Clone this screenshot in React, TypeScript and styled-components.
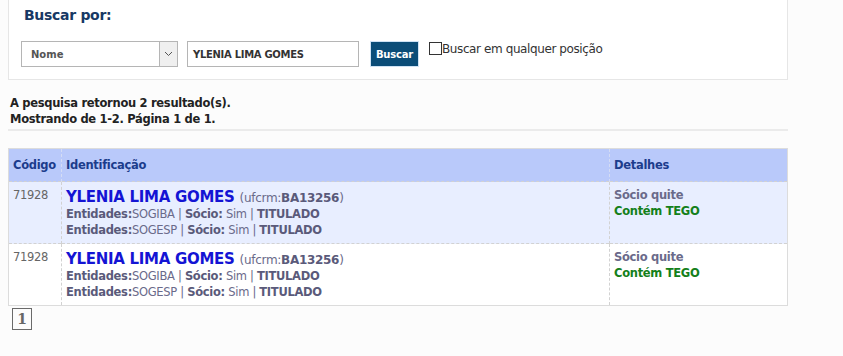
import React from 'react';
import styled, { createGlobalStyle } from 'styled-components';

const GlobalStyle = createGlobalStyle`
  html, body {
    margin: 0;
    padding: 0;
    background: #fcfcfc;
  }
  body {
    padding: 0 8px;
    font-family: 'DejaVu Sans', Verdana, sans-serif;
  }
`;

const Page = styled.div`
  width: 780px;
`;

const SearchPanel = styled.div`
  box-sizing: border-box;
  height: 80px;
  background: #ffffff;
  border: 1px solid #e6e6e6;
  border-top: none;
  padding: 7px 0 0 12px;
`;

const PanelTitle = styled.h3`
  margin: 0 0 0 3px;
  font-size: 14px;
  font-weight: bold;
  color: #173864;
  letter-spacing: -0.3px;
`;

const SearchRow = styled.div`
  display: flex;
  align-items: flex-start;
  margin-top: 18px;
`;

const SelectBox = styled.div`
  box-sizing: border-box;
  width: 157px;
  height: 26px;
  border: 1px solid #b5b5b5;
  background: #fff;
  display: flex;
  align-items: stretch;
`;

const SelectText = styled.span`
  flex: 1;
  display: flex;
  align-items: center;
  padding-left: 9px;
  font-size: 10px;
  font-weight: bold;
  color: #555;
`;

const SelectArrow = styled.span`
  width: 17px;
  border-left: 1px solid #b5b5b5;
  background: #efefef;
  display: flex;
  align-items: center;
  justify-content: center;
`;

const TextInput = styled.div`
  box-sizing: border-box;
  width: 172px;
  height: 26px;
  margin-left: 9px;
  border: 1px solid #b5b5b5;
  background: #fff;
  display: flex;
  align-items: center;
  padding-left: 5px;
  font-size: 10px;
  font-weight: bold;
  color: #333;
  letter-spacing: -0.3px;
`;

const SearchButton = styled.button`
  box-sizing: border-box;
  margin-left: 11px;
  width: 49px;
  height: 26px;
  padding: 0;
  background: #0b4d78;
  color: #fff;
  border: 1px solid #cfe3f5;
  font-family: 'DejaVu Sans', Verdana, sans-serif;
  font-size: 10px;
  font-weight: bold;
  letter-spacing: -0.2px;
`;

const CheckLabel = styled.label`
  display: flex;
  align-items: flex-start;
  margin-left: 10px;
  margin-top: 1px;
  font-size: 12px;
  color: #333;
  letter-spacing: -0.4px;
`;

const CheckSquare = styled.span`
  box-sizing: border-box;
  width: 13px;
  height: 13px;
  border: 1px solid #333;
  background: #fff;
`;

const Summary = styled.div`
  margin-top: 15px;
  padding-left: 2px;
  font-size: 11.5px;
  font-weight: bold;
  color: #222;
  line-height: 16px;
  letter-spacing: -0.3px;
`;

const Divider = styled.hr`
  margin: 2px 0 0;
  border: none;
  height: 2px;
  background: #ebebeb;
`;

const Table = styled.table`
  width: 780px;
  margin-top: 17px;
  border-collapse: collapse;
  border: 1px solid #dcdcdc;
  table-layout: fixed;
`;

const HeadCell = styled.th<{ $w?: number }>`
  width: ${({ $w }) => ($w ? `${$w}px` : 'auto')};
  height: 32px;
  background: #b9c9fa;
  color: #1c3c8c;
  font-size: 11.5px;
  font-weight: bold;
  text-align: left;
  padding: 0 4px;
  border-left: 1px dashed #d4dcf4;
  letter-spacing: -0.3px;
  &:first-child {
    border-left: none;
  }
`;

const Row = styled.tr<{ $alt?: boolean }>`
  background: ${({ $alt }) => ($alt ? '#ffffff' : '#e8eeff')};
  border-top: 1px dashed #d2d2d2;
`;

const Cell = styled.td`
  vertical-align: top;
  height: 62px;
  box-sizing: border-box;
  padding: 7px 4px 0;
  border-left: 1px dashed #d2d2d2;
  &:first-child {
    border-left: none;
  }
`;

const Code = styled.div`
  margin-top: -1px;
  font-size: 11.5px;
  line-height: 14px;
  color: #666;
  letter-spacing: -0.3px;
`;

const NameLine = styled.div`
  line-height: 15px;
  white-space: nowrap;
`;

const Name = styled.span`
  font-size: 15px;
  font-weight: bold;
  color: #1414d4;
  letter-spacing: -0.3px;
`;

const Crm = styled.span`
  font-size: 12px;
  color: #6a6a8a;
  letter-spacing: -0.3px;
  b {
    color: #5a5a7a;
  }
`;

const InfoLine = styled.div`
  font-size: 11.5px;
  color: #6a6a8a;
  line-height: 16px;
  letter-spacing: -0.3px;
  white-space: nowrap;
  b {
    color: #5a5a7a;
  }
`;

const DetailList = styled.div`
  margin-top: -2px;
`;

const Detail = styled.div<{ $green?: boolean }>`
  font-size: 11.5px;
  font-weight: bold;
  line-height: 16px;
  color: ${({ $green }) => ($green ? '#14801a' : '#6a6a8a')};
  letter-spacing: -0.3px;
`;

const Pager = styled.div`
  margin-top: 2px;
  margin-left: 4px;
  display: flex;
`;

const PageBox = styled.span`
  box-sizing: border-box;
  width: 20px;
  height: 22px;
  border: 1px solid #6a6a6a;
  display: flex;
  align-items: center;
  justify-content: center;
  font-family: 'DejaVu Serif', serif;
  font-size: 14px;
  font-weight: bold;
  color: #666;
`;

interface Result {
  code: string;
  name: string;
  crm: string;
  entities: string[];
}

const results: Result[] = [
  { code: '71928', name: 'YLENIA LIMA GOMES', crm: 'BA13256', entities: ['SOGIBA', 'SOGESP'] },
  { code: '71928', name: 'YLENIA LIMA GOMES', crm: 'BA13256', entities: ['SOGIBA', 'SOGESP'] },
];

const App: React.FC = () => {
  return (
    <Page>
      <GlobalStyle />
      <SearchPanel>
        <PanelTitle>Buscar por:</PanelTitle>
        <SearchRow>
          <SelectBox>
            <SelectText>Nome</SelectText>
            <SelectArrow>
              <svg width="9" height="6" viewBox="0 0 9 6">
                <path d="M1 1l3.5 3.5L8 1" fill="none" stroke="#555" strokeWidth="1" />
              </svg>
            </SelectArrow>
          </SelectBox>
          <TextInput>YLENIA LIMA GOMES</TextInput>
          <SearchButton>Buscar</SearchButton>
          <CheckLabel>
            <CheckSquare />
            Buscar em qualquer posição
          </CheckLabel>
        </SearchRow>
      </SearchPanel>

      <Summary>
        A pesquisa retornou 2 resultado(s).
        <br />
        Mostrando de 1-2. Página 1 de 1.
      </Summary>
      <Divider />

      <Table>
        <thead>
          <tr>
            <HeadCell $w={44}>Código</HeadCell>
            <HeadCell>Identificação</HeadCell>
            <HeadCell $w={169}>Detalhes</HeadCell>
          </tr>
        </thead>
        <tbody>
          {results.map((r, i) => (
            <Row key={i} $alt={i % 2 === 1}>
              <Cell>
                <Code>{r.code}</Code>
              </Cell>
              <Cell>
                <NameLine>
                  <Name>{r.name}</Name> <Crm>(ufcrm:<b>{r.crm}</b>)</Crm>
                </NameLine>
                {r.entities.map((e) => (
                  <InfoLine key={e}>
                    <b>Entidades:</b>{e} | <b>Sócio:</b> Sim | <b>TITULADO</b>
                  </InfoLine>
                ))}
              </Cell>
              <Cell>
                <DetailList>
                  <Detail>Sócio quite</Detail>
                  <Detail $green>Contém TEGO</Detail>
                </DetailList>
              </Cell>
            </Row>
          ))}
        </tbody>
      </Table>

      <Pager>
        <PageBox>1</PageBox>
      </Pager>
    </Page>
  );
};

export default App;
